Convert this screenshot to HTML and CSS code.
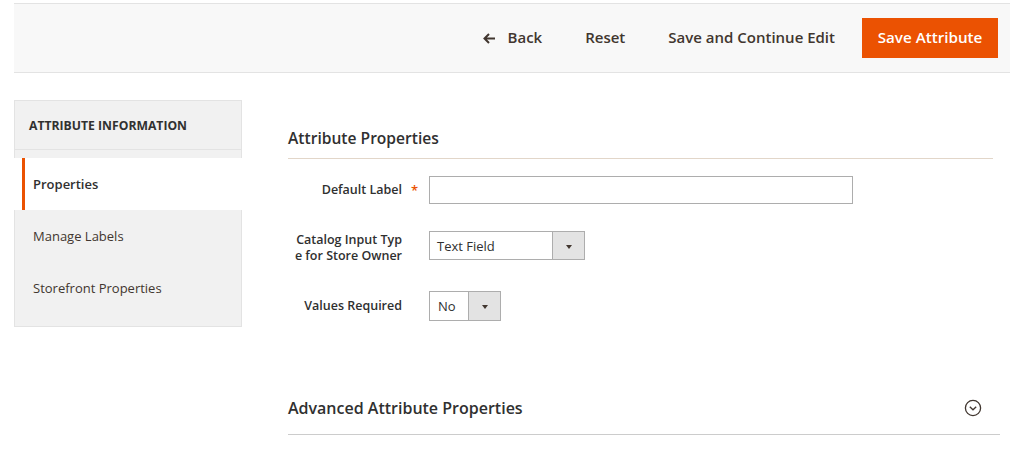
FILE: index.html
```html
<!DOCTYPE html>
<html>
<head>
<meta charset="utf-8">
<link rel="stylesheet" href="styles.css">
</head>
<body>
<div class="page">
  <header class="actions">
    <button class="act back"><svg width="13" height="11" viewBox="0 0 13 11"><path d="M12 5.5H2M6 1L1.5 5.5L6 10" fill="none" stroke="#41362f" stroke-width="2"/></svg><span>Back</span></button>
    <button class="act reset">Reset</button>
    <button class="act">Save and Continue Edit</button>
    <button class="primary">Save Attribute</button>
  </header>
  <div class="body">
    <aside class="nav">
      <div class="nav-title">ATTRIBUTE INFORMATION</div>
      <ul class="nav-items">
        <li class="item active">Properties</li>
        <li class="item">Manage Labels</li>
        <li class="item">Storefront Properties</li>
      </ul>
    </aside>
    <main class="content">
      <h2 class="section-title">Attribute Properties</h2>
      <div class="form">
        <div class="row">
          <label class="label">Default Label</label>
          <span class="req">*</span>
          <div class="input wide"></div>
        </div>
        <div class="row top">
          <label class="label two">Catalog Input Type for Store Owner</label>
          <span class="req"></span>
          <div class="select s-type"><span class="val">Text Field</span><span class="arrow"></span></div>
        </div>
        <div class="row">
          <label class="label">Values Required</label>
          <span class="req"></span>
          <div class="select s-no"><span class="val">No</span><span class="arrow"></span></div>
        </div>
      </div>
      <div class="collapsible">
        <h2 class="adv-title">Advanced Attribute Properties</h2>
        <svg class="toggle" width="18" height="18" viewBox="0 0 18 18"><circle cx="9" cy="9" r="7.6" fill="none" stroke="#41362f" stroke-width="1.3"/><path d="M5.8 7.8L9 10.8L12.2 7.8" fill="none" stroke="#41362f" stroke-width="1.3"/></svg>
      </div>
    </main>
  </div>
</div>
</body>
</html>
```
FILE: styles.css
```css
* { box-sizing: border-box; }
html, body { margin: 0; padding: 0; background: #fff; }
body {
  font-family: "Open Sans", "Noto Sans", sans-serif;
  color: #41362f;
  width: 1024px;
  height: 452px;
  overflow: hidden;
}
.page { padding: 3px 14px 0 14px; }
.actions {
  width: 996px;
  height: 70px;
  background: #f8f8f8;
  border-top: 1px solid #e3e3e3;
  border-bottom: 1px solid #e3e3e3;
  display: flex;
  justify-content: flex-end;
  align-items: center;
  gap: 12px;
  padding-right: 12px;
}
.act, .primary {
  font-family: inherit;
  font-size: 15px;
  font-weight: 600;
  height: 40px;
  padding: 0 15px 2px 15px;
  border: 0;
  background: transparent;
  color: #41362f;
  display: flex;
  align-items: center;
}
.back { margin-right: 1px; }
.reset { margin-right: 1px; }
.back svg { margin-right: 12px; margin-top: 2px; }
.primary {
  background: #eb5202;
  color: #fff;
  width: 136px;
  justify-content: center;
  font-size: 15.2px;
}
.body {
  display: flex;
  margin-top: 27px;
  gap: 46px;
}
.nav {
  width: 228px;
  background: #f1f1f1;
  border: 1px solid #e3e3e3;
  height: 227px;
  flex: none;
}
.nav-title {
  height: 49px;
  border-bottom: 1px solid #e3e3e3;
  font-size: 12.2px;
  font-weight: 700;
  color: #303030;
  padding-left: 14px;
  display: flex;
  align-items: center;
}
.nav-items {
  list-style: none;
  margin: 0;
  padding: 8px 0 0 0;
}
.item {
  height: 52px;
  display: flex;
  align-items: center;
  padding-left: 18px;
  font-size: 13px;
  color: #41362f;
}
.item.active {
  background: #fff;
  margin-left: 7px;
  margin-right: -1px;
  border-left: 3px solid #eb5202;
  padding-left: 8px;
  box-shadow: -8px 0 0 #fff;
  font-weight: 600;
  color: #303030;
}
.content {
  width: 705px;
  padding-top: 28px;
}
.section-title, .adv-title {
  margin: 0;
  font-size: 16px;
  line-height: 20px;
  font-weight: 600;
  color: #303030;
}
.section-title {
  font-size: 15.6px;
  padding-bottom: 10px;
  border-bottom: 1px solid #e2d6c9;
}
.form { padding-top: 17px; }
.row {
  display: flex;
  align-items: center;
  margin-bottom: 27px;
}
.row:last-child { margin-bottom: 0; }
.row.top { align-items: flex-start; }
.row.top .label { padding-top: 1px; }
.label {
  width: 114px;
  text-align: right;
  font-size: 12.5px;
  font-weight: 600;
  color: #303030;
  line-height: 16px;
}
.label.two { word-break: break-all; padding-left: 6px; }
.req {
  width: 27px;
  padding-left: 9px;
  color: #eb5202;
  font-size: 13px;
  font-weight: 600;
}
.input {
  height: 28px;
  border: 1px solid #adadad;
  background: #fff;
}
.input.wide { width: 424px; }
.select {
  height: 29px;
  border: 1px solid #adadad;
  background: #fff;
  display: flex;
  font-size: 13px;
  color: #303030;
}
.select .val { flex: 1; padding-left: 7px; display: flex; align-items: center; }
.select .arrow {
  width: 32px;
  background: #e3e3e3;
  border-left: 1px solid #adadad;
  position: relative;
}
.select .arrow::after {
  content: "";
  position: absolute;
  left: 50%;
  top: 50%;
  margin-left: -3px;
  margin-top: -1px;
  border-left: 3px solid transparent;
  border-right: 3px solid transparent;
  border-top: 4px solid #41362f;
}
.s-type { width: 156px; }
.s-no { width: 72px; height: 30px; }
.s-no .val { padding-left: 8px; }
.collapsible {
  margin-top: 77px;
  display: flex;
  justify-content: space-between;
  align-items: center;
  padding-bottom: 16px;
  border-bottom: 1px solid #cccccc;
  width: 712px;
}
.toggle { margin-right: 18px; }
```
